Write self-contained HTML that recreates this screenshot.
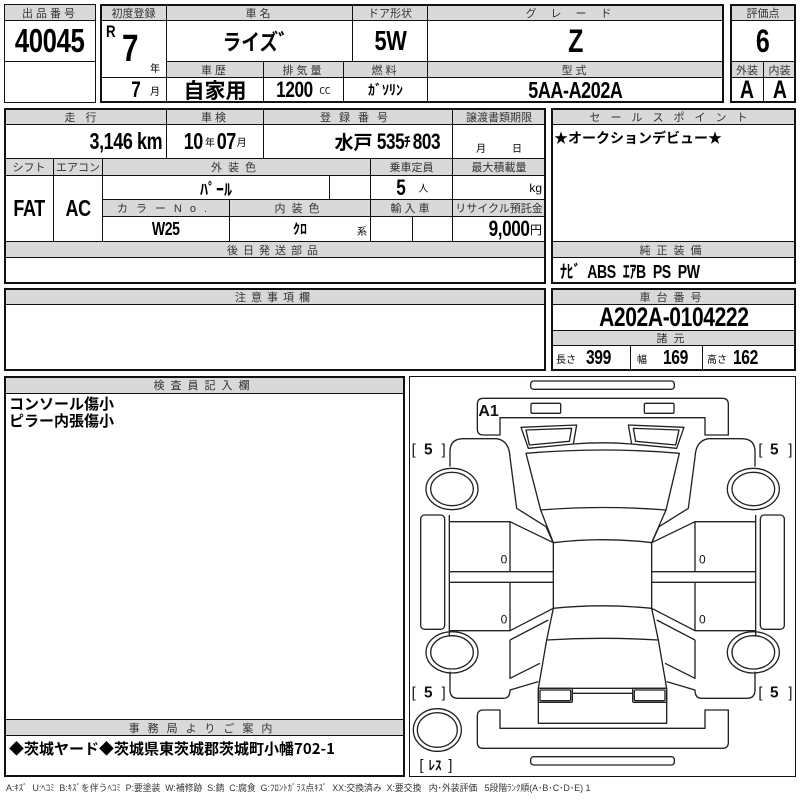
<!DOCTYPE html>
<html><head><meta charset="utf-8"><style>
*{margin:0;padding:0;box-sizing:border-box}
body{width:800px;height:800px;background:#fff;position:relative;overflow:hidden;font-family:"Liberation Sans","Noto Sans CJK JP",sans-serif;color:#000}
.c{position:absolute;border:1.5px solid #111;display:flex;align-items:center;justify-content:center;white-space:nowrap;overflow:hidden}
.h{background:#d9d9d9;font-size:11px;color:#333;letter-spacing:3px}
.b{font-family:"Liberation Sans",sans-serif;font-weight:bold;display:inline-block;transform:scaleX(.78);letter-spacing:-0.5px}
.r{transform-origin:right center}
.l{transform-origin:left center}
.j{font-family:"Noto Sans CJK JP",sans-serif;font-weight:bold}
.s{font-size:10px;font-weight:normal;font-family:"Noto Sans CJK JP",sans-serif}
.o{position:absolute;border:2px solid #111}
</style></head><body>

<div class="c h" style="left:4px;top:4px;width:92px;height:17px">出品番号</div>
<div class="c" style="left:4px;top:20px;width:92px;height:42px"><span class="b" style="font-size:33px">40045</span></div>
<div class="c" style="left:4px;top:61px;width:92px;height:42px"></div>

<div class="c h" style="left:100px;top:4px;width:67px;height:17px;letter-spacing:0">初度登録</div>
<div class="c h" style="left:166px;top:4px;width:187px;height:17px">車名</div>
<div class="c h" style="left:352px;top:4px;width:76px;height:17px;letter-spacing:0">ドア形状</div>
<div class="c h" style="left:427px;top:4px;width:297px;height:17px;letter-spacing:14px">グレード</div>
<div class="c" style="left:100px;top:20px;width:67px;height:58px"></div>
<div style="position:absolute;left:106px;top:22px"><span class="b l" style="font-size:17px">R</span></div>
<div style="position:absolute;left:122px;top:28px"><span class="b l" style="font-size:38px">7</span></div>
<div class="s" style="position:absolute;left:150px;top:60px">年</div>
<div class="c j" style="left:166px;top:20px;width:187px;height:42px;font-size:22px"><span style="display:inline-block;transform:scaleX(.85)">ライズ゛</span></div>
<div class="c" style="left:352px;top:20px;width:76px;height:42px"><span class="b" style="font-size:28px">5W</span></div>
<div class="c" style="left:427px;top:20px;width:297px;height:42px"><span class="b" style="font-size:32px">Z</span></div>
<div class="c h" style="left:166px;top:61px;width:98px;height:17px">車歴</div>
<div class="c h" style="left:263px;top:61px;width:81px;height:17px">排気量</div>
<div class="c h" style="left:343px;top:61px;width:85px;height:17px">燃料</div>
<div class="c h" style="left:427px;top:61px;width:297px;height:17px">型式</div>
<div class="c" style="left:100px;top:77px;width:67px;height:26px;justify-content:flex-end;padding-right:6px"><span class="b" style="font-size:22px">7</span><span class="s" style="margin-left:8px">月</span></div>
<div class="c j" style="left:166px;top:77px;width:98px;height:26px;font-size:21px">自家用</div>
<div class="c" style="left:263px;top:77px;width:81px;height:26px"><span class="b" style="font-size:22px;margin:0 -5px">1200</span><span class="s" style="margin-left:6px;font-size:9px">CC</span></div>
<div class="c j" style="left:343px;top:77px;width:85px;height:26px;font-size:14px">ｶﾞｿﾘﾝ</div>
<div class="c" style="left:427px;top:77px;width:297px;height:26px"><span class="b" style="font-size:23px">5AA-A202A</span></div>
<div class="o" style="left:100px;top:4px;width:624px;height:99px"></div>

<div class="c h" style="left:730px;top:4px;width:66px;height:17px;letter-spacing:0">評価点</div>
<div class="c" style="left:730px;top:20px;width:66px;height:42px"><span class="b" style="font-size:32px">6</span></div>
<div class="c h" style="left:730px;top:61px;width:34px;height:17px;letter-spacing:0">外装</div>
<div class="c h" style="left:763px;top:61px;width:33px;height:17px;letter-spacing:0">内装</div>
<div class="c" style="left:730px;top:77px;width:34px;height:26px"><span class="b" style="font-size:25px">A</span></div>
<div class="c" style="left:763px;top:77px;width:33px;height:26px"><span class="b" style="font-size:25px">A</span></div>
<div class="o" style="left:730px;top:4px;width:66px;height:99px"></div>

<div class="c h" style="left:4px;top:108px;width:163px;height:17px;letter-spacing:10px">走行</div>
<div class="c h" style="left:166px;top:108px;width:98px;height:17px">車検</div>
<div class="c h" style="left:263px;top:108px;width:190px;height:17px;letter-spacing:8px">登録番号</div>
<div class="c h" style="left:452px;top:108px;width:94px;height:17px;letter-spacing:0">譲渡書類期限</div>
<div class="c" style="left:4px;top:124px;width:163px;height:35px;justify-content:flex-end;padding-right:4px"><span class="b r" style="font-size:23px">3,146 km</span></div>
<div class="c" style="left:166px;top:124px;width:98px;height:35px"><span class="b" style="font-size:23px;margin:0 -2px">10</span><span class="s" style="margin:0 1px">年</span><span class="b" style="font-size:23px;margin:0 -2px">07</span><span class="s">月</span></div>
<div class="c" style="left:263px;top:124px;width:190px;height:35px;justify-content:flex-end;padding-right:12px"><span class="j" style="font-size:19px;margin-right:4px">水戸</span><span class="b" style="font-size:22px;margin:0 -4px">535</span><span class="j" style="font-size:14px">ﾁ</span><span class="b r" style="font-size:22px;margin-left:-6px">803</span></div>
<div class="c" style="left:452px;top:124px;width:94px;height:35px;align-items:flex-end;padding-bottom:3px"><span class="s" style="margin-right:26px">月</span><span class="s">日</span></div>

<div class="c h" style="left:4px;top:158px;width:50px;height:18px;letter-spacing:0">シフト</div>
<div class="c h" style="left:53px;top:158px;width:50px;height:18px;letter-spacing:0">エアコン</div>
<div class="c h" style="left:102px;top:158px;width:269px;height:18px;letter-spacing:6px">外装色</div>
<div class="c h" style="left:370px;top:158px;width:83px;height:18px;letter-spacing:0">乗車定員</div>
<div class="c h" style="left:452px;top:158px;width:94px;height:18px;letter-spacing:0">最大積載量</div>
<div class="c" style="left:4px;top:175px;width:50px;height:67px"><span class="b" style="font-size:23px">FAT</span></div>
<div class="c" style="left:53px;top:175px;width:50px;height:67px"><span class="b" style="font-size:23px">AC</span></div>
<div class="c j" style="left:102px;top:175px;width:228px;height:25px;font-size:16px">ﾊﾟｰﾙ</div>
<div class="c" style="left:329px;top:175px;width:42px;height:25px"></div>
<div class="c" style="left:370px;top:175px;width:83px;height:25px"><span class="b" style="font-size:22px">5</span><span class="s" style="margin-left:12px">人</span></div>
<div class="c" style="left:452px;top:175px;width:94px;height:25px;justify-content:flex-end;padding-right:3px"><span style="font-size:12px">kg</span></div>
<div class="c h" style="left:102px;top:199px;width:128px;height:18px;letter-spacing:8px">カラーNo.</div>
<div class="c h" style="left:229px;top:199px;width:142px;height:18px;letter-spacing:6px">内装色</div>
<div class="c h" style="left:370px;top:199px;width:83px;height:18px">輸入車</div>
<div class="c h" style="left:452px;top:199px;width:94px;height:18px;letter-spacing:0">リサイクル預託金</div>
<div class="c" style="left:102px;top:216px;width:128px;height:26px"><span class="b" style="font-size:18px">W25</span></div>
<div class="c" style="left:229px;top:216px;width:142px;height:26px"><span class="j" style="font-size:14px">ｸﾛ</span><span class="s" style="position:absolute;right:3px;bottom:3px">系</span></div>
<div class="c" style="left:370px;top:216px;width:43px;height:26px"></div>
<div class="c" style="left:412px;top:216px;width:41px;height:26px"></div>
<div class="c" style="left:452px;top:216px;width:94px;height:26px;justify-content:flex-end;padding-right:3px"><span class="b r" style="font-size:22px">9,000</span><span class="s" style="font-size:12px">円</span></div>
<div class="c h" style="left:4px;top:241px;width:542px;height:17px;letter-spacing:5px">後日発送部品</div>
<div class="c" style="left:4px;top:257px;width:542px;height:27px"></div>
<div class="o" style="left:4px;top:108px;width:542px;height:176px"></div>

<div class="c h" style="left:551px;top:108px;width:245px;height:17px;letter-spacing:10px">セールスポイント</div>
<div class="c" style="left:551px;top:124px;width:245px;height:118px;align-items:flex-start;justify-content:flex-start;padding:3px 0 0 2px"><span class="j" style="font-size:14px">★オークションデビュー★</span></div>
<div class="c h" style="left:551px;top:241px;width:245px;height:17px;letter-spacing:6px">純正装備</div>
<div class="c" style="left:551px;top:257px;width:245px;height:27px;justify-content:flex-start;padding-left:8px"><span class="b l" style="font-size:18px;font-family:'Liberation Sans','Noto Sans CJK JP',sans-serif">ﾅﾋﾞ&nbsp; ABS&nbsp; ｴｱB&nbsp; PS&nbsp; PW</span></div>
<div class="o" style="left:551px;top:108px;width:245px;height:176px"></div>

<div class="c h" style="left:4px;top:288px;width:542px;height:17px;letter-spacing:5px">注意事項欄</div>
<div class="c" style="left:4px;top:304px;width:542px;height:67px"></div>
<div class="o" style="left:4px;top:288px;width:542px;height:83px"></div>

<div class="c h" style="left:551px;top:288px;width:245px;height:17px;letter-spacing:6px">車台番号</div>
<div class="c" style="left:551px;top:304px;width:245px;height:27px"><span class="b" style="font-size:27px">A202A-0104222</span></div>
<div class="c h" style="left:551px;top:330px;width:245px;height:16px;letter-spacing:6px">諸元</div>
<div class="c" style="left:551px;top:345px;width:80px;height:26px;justify-content:flex-start;padding-left:4px"><span class="s">長さ</span><span class="b l" style="font-size:20px;margin-left:10px">399</span></div>
<div class="c" style="left:630px;top:345px;width:73px;height:26px;justify-content:flex-start;padding-left:6px"><span class="s">幅</span><span class="b l" style="font-size:20px;margin-left:16px">169</span></div>
<div class="c" style="left:702px;top:345px;width:94px;height:26px;justify-content:flex-start;padding-left:4px"><span class="s">高さ</span><span class="b l" style="font-size:20px;margin-left:6px">162</span></div>
<div class="o" style="left:551px;top:288px;width:245px;height:83px"></div>

<div class="c h" style="left:4px;top:376px;width:401px;height:18px;letter-spacing:6px">検査員記入欄</div>
<div class="c" style="left:4px;top:393px;width:401px;height:327px;align-items:flex-start;justify-content:flex-start;padding:1px 0 0 4px"><div class="j" style="font-size:15px;line-height:17px">コンソール傷小<br>ピラー内張傷小</div></div>
<div class="c h" style="left:4px;top:719px;width:401px;height:17px;letter-spacing:8px">事務局よりご案内</div>
<div class="c" style="left:4px;top:735px;width:401px;height:42px;align-items:flex-start;justify-content:flex-start;padding:2px 0 0 4px"><span class="j" style="font-size:15px">◆茨城ヤード◆茨城県東茨城郡茨城町小幡702-1</span></div>
<div class="o" style="left:4px;top:376px;width:401px;height:401px"></div>

<div class="o" style="left:409px;top:376px;width:387px;height:401px;border-width:1.5px"></div>
<svg style="position:absolute;left:400px;top:370px" width="400" height="430" viewBox="0 0 1200 1290" fill="none" stroke="#222" stroke-width="4" stroke-linejoin="round">
<rect x="392" y="33" width="431" height="25" rx="9"/>
<rect x="392" y="1160" width="431" height="25" rx="9"/>
<path d="M250,85 H967 Q985,85 985,103 V195 H915 V143 H300 V195 H250 Q232,195 232,177 V103 Q232,85 250,85 Z"/>
<rect x="393" y="100" width="89" height="30" rx="4"/>
<rect x="733" y="100" width="89" height="30" rx="4"/>
<path d="M250,1135 H967 Q985,1135 985,1117 V1020 H915 V1075 H300 V1020 H250 Q232,1020 232,1038 V1117 Q232,1135 250,1135 Z"/>
<path d="M363,172 L530,165 L520,222 L385,235 Z M378,180 L515,175 L508,214 L388,225 Z"/>
<path d="M852,172 L685,165 L695,222 L830,235 Z M837,180 L700,175 L707,214 L827,225 Z"/>
<path d="M520,222 Q608,215 695,222"/>
<path d="M378,250 Q608,230 838,250 L798,420 Q608,405 422,420 Z"/>
<path d="M422,420 L460,518 Q608,500 755,518 L798,420"/>
<path d="M460,518 V715 Q608,700 755,715 V518"/>
<path d="M460,715 L440,810 Q608,800 775,810 L755,715"/>
<path d="M440,810 L415,955 V1060 H800 V955 L775,810"/>
<path d="M415,955 H800"/>
<rect x="415" y="955" width="102" height="42" rx="4"/><rect x="420" y="960" width="92" height="32" rx="3"/>
<rect x="698" y="955" width="102" height="42" rx="4"/><rect x="703" y="960" width="92" height="32" rx="3"/>
<path d="M517,970 H698"/>
<path d="M150,290 V245 Q150,206 190,206 H290 Q328,212 330,262 L350,415 L438,470 L458,515"/>
<path d="M1065,290 V245 Q1065,206 1025,206 H925 Q887,212 885,262 L865,415 L777,470 L757,515"/>
<path d="M148,435 V455 H330 L460,518 M148,455 V605 H460 M330,455 V605 M148,605 V637 H460 M148,637 V782 H330 L460,715 M330,637 V782 M148,782 V800"/>
<path d="M1067,435 V455 H885 L755,518 M1067,455 V605 H755 M885,455 V605 M1067,605 V637 H755 M1067,637 V782 H885 L755,715 M885,637 V782 M1067,782 V800"/>
<path d="M330,810 L445,750 M330,810 V925 L420,880"/>
<path d="M885,810 L770,750 M885,810 V925 L795,880"/>
<path d="M150,905 V960 Q150,985 175,985 H310 Q330,985 330,960 L415,935"/>
<path d="M1065,905 V960 Q1065,985 1040,985 H905 Q885,985 885,960 L800,935"/>
<rect x="62" y="435" width="72" height="343" rx="12"/>
<rect x="1081" y="435" width="72" height="343" rx="12"/>
<ellipse cx="156" cy="357" rx="78" ry="62"/><ellipse cx="156" cy="357" rx="64" ry="50"/>
<ellipse cx="156" cy="847" rx="78" ry="62"/><ellipse cx="156" cy="847" rx="64" ry="50"/>
<ellipse cx="1060" cy="357" rx="78" ry="62"/><ellipse cx="1060" cy="357" rx="64" ry="50"/>
<ellipse cx="1060" cy="847" rx="78" ry="62"/><ellipse cx="1060" cy="847" rx="64" ry="50"/>
<ellipse cx="112" cy="1080" rx="72" ry="64"/><ellipse cx="112" cy="1080" rx="60" ry="52"/>
<g stroke="none" fill="#111" font-family="Liberation Sans, sans-serif">
<text x="235" y="138" font-size="48" font-weight="bold">A1</text>
<text x="35" y="253" font-size="44">[</text><text x="72" y="253" font-size="46" font-weight="bold">5</text><text x="125" y="253" font-size="44">]</text>
<text x="1075" y="253" font-size="44">[</text><text x="1110" y="253" font-size="46" font-weight="bold">5</text><text x="1165" y="253" font-size="44">]</text>
<text x="35" y="983" font-size="44">[</text><text x="72" y="983" font-size="46" font-weight="bold">5</text><text x="125" y="983" font-size="44">]</text>
<text x="1075" y="983" font-size="44">[</text><text x="1110" y="983" font-size="46" font-weight="bold">5</text><text x="1165" y="983" font-size="44">]</text>
<text x="58" y="1200" font-size="44">[</text><text x="85" y="1200" font-size="40" font-weight="bold" font-family="Noto Sans CJK JP">ﾚｽ</text><text x="145" y="1200" font-size="44">]</text>
<text x="302" y="580" font-size="36">0</text><text x="302" y="760" font-size="36">0</text>
<text x="897" y="580" font-size="36">0</text><text x="897" y="760" font-size="36">0</text>
</g>
</svg>

<div style="position:absolute;left:6px;top:781px;font-size:9px;color:#333;white-space:nowrap;transform:scaleX(.98);transform-origin:left;font-family:'Liberation Sans','Noto Sans CJK JP',sans-serif">A:ｷｽﾞ&nbsp; U:ﾍｺﾐ&nbsp; B:ｷｽﾞを伴うﾍｺﾐ&nbsp; P:要塗装&nbsp; W:補修跡&nbsp; S:錆&nbsp; C:腐食&nbsp; G:ﾌﾛﾝﾄｶﾞﾗｽ点ｷｽﾞ&nbsp; XX:交換済み&nbsp; X:要交換&nbsp;&nbsp; 内･外装評価&nbsp;&nbsp; 5段階ﾗﾝｸ順(A･B･C･D･E) 1</div>
</body></html>
